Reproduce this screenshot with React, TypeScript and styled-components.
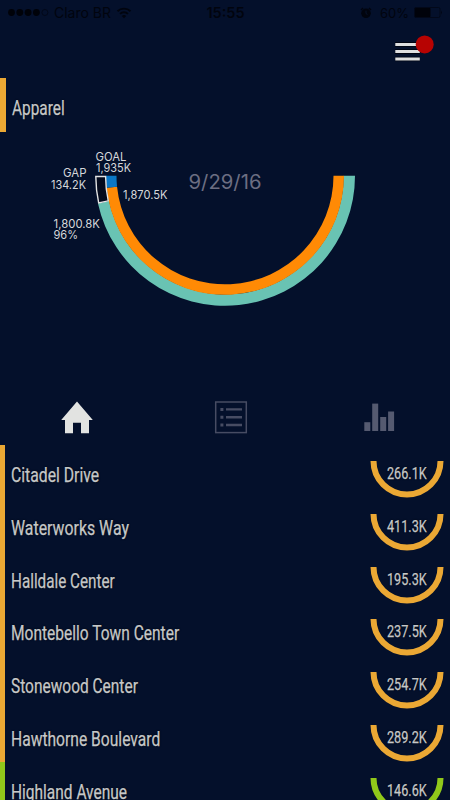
import React, { useLayoutEffect, useRef, useState } from 'react';
import styled, { createGlobalStyle } from 'styled-components';

const GlobalStyle = createGlobalStyle`
  * {
    box-sizing: border-box;
  }

  body {
    margin: 0;
    background: #04102b;
    font-family: Roboto, 'Liberation Sans', sans-serif;
    overflow: hidden;
  }

  svg {
    display: block;
  }
`;

const Screen = styled.div`
  display: flex;
  flex-direction: column;
  height: 800px;
  overflow: hidden;
  background: #04102b;

  > * {
    flex: none;
  }
`;

const StatusBar = styled.div`
  display: grid;
  grid-template-columns: 1fr auto 1fr;
  align-items: center;
  height: 25px;
  padding: 0 7px 0 8px;
  color: #01040e;
  font-family: Inter, 'Liberation Sans', sans-serif;
  font-size: 14px;
`;

const Clock = styled.span`
  font-size: 14.5px;
  font-weight: 600;
`;

const Battery = styled.span`
  padding-left: 3px;
  font-size: 13px;
`;

const StatusGroup = styled.div<{ $end?: boolean }>`
  display: flex;
  align-items: center;
  justify-content: ${({ $end }) => ($end ? 'flex-end' : 'flex-start')};
  gap: 5px;
`;

const Header = styled.header`
  display: flex;
  justify-content: flex-end;
  height: 53px;
  padding: 10px 16px 0 0;
`;

const MenuButton = styled.button`
  width: 40px;
  height: 30px;
  padding: 0;
  border: 0;
  background: none;
`;

const Category = styled.div`
  display: flex;
  align-items: center;
  height: 54px;
  padding: 6px 0 0 6px;
  border-left: 6px solid #eca934;
`;

const GaugeArea = styled.section`
  height: 258px;
`;

const ChartText = styled.text`
  fill: #d6d7da;
  font-family: Inter, 'Liberation Sans', sans-serif;
  font-size: 12px;
`;

const DateText = styled(ChartText)`
  fill: #6c6e82;
  font-size: 19.5px;
`;

const Tabs = styled.nav`
  display: grid;
  grid-template-columns: 154px 154px 142px;
  justify-items: center;
  align-items: center;
  height: 55px;
  padding-bottom: 1px;
`;

const List = styled.div`
  display: flex;
  flex-direction: column;
`;

const Row = styled.div<{ $color: string }>`
  display: flex;
  flex: none;
  justify-content: space-between;
  height: 52.75px;
  padding: 16px 6px 0 6px;
  border-left: 5px solid ${({ $color }) => $color};
`;

const RowName = styled.div`
  padding-top: 3px;
`;

const MiniGauge = styled.div`
  display: grid;
  width: 74px;
  height: 37px;

  > * {
    grid-area: 1 / 1;
  }
`;

const MiniValue = styled.div`
  display: flex;
  justify-content: center;
  padding-top: 1px;
`;

const FitBox = styled.div`
  height: 24px;
  color: #c6c8c9;
  text-shadow: 0 0 2px #000;
`;

const FitLabel = styled.span<{ $size: number }>`
  display: inline-block;
  transform-origin: 0 50%;
  white-space: nowrap;
  font-size: ${({ $size }) => $size}px;
  line-height: 24px;
  -webkit-text-stroke: 0.25px #c6c8c9;
`;

interface ICondensedProps {
  text: string;
  /* The final width of the label in pixels */
  width: number;
  size?: number;
}

// Squeezes a regular face into a condensed one
const Condensed: React.FunctionComponent<ICondensedProps> = ({
  text,
  width,
  size = 19.5,
}) => {
  const ref = useRef<HTMLSpanElement>(null);
  const [scale, setScale] = useState(0.8);

  useLayoutEffect(() => {
    if (ref.current) {
      setScale(width / ref.current.offsetWidth);
    }
  }, [text, width, size]);

  return (
    <FitBox style={{ width }}>
      <FitLabel ref={ref} $size={size} style={{ transform: `scaleX(${scale})` }}>
        {text}
      </FitLabel>
    </FitBox>
  );
};

const YELLOW = '#eba834';
const GREEN = '#91c81a';

const stores = [
  { name: 'Citadel Drive', width: 88, value: '266.1K', color: YELLOW },
  { name: 'Waterworks Way', width: 118, value: '411.3K', color: YELLOW },
  { name: 'Halldale Center', width: 104, value: '195.3K', color: YELLOW },
  { name: 'Montebello Town Center', width: 168, value: '237.5K', color: YELLOW },
  { name: 'Stonewood Center', width: 127, value: '254.7K', color: YELLOW },
  { name: 'Hawthorne Boulevard', width: 149, value: '289.2K', color: YELLOW },
  { name: 'Highland Avenue', width: 116, value: '146.6K', color: GREEN },
];

const labels = [
  { text: 'GOAL', x: 95.5, y: 161, width: 31 },
  { text: '1,935K', x: 96, y: 172, width: 35 },
  { text: 'GAP', x: 63, y: 177, width: 23.5 },
  { text: '134.2K', x: 51, y: 188.5, width: 35 },
  { text: '1,870.5K', x: 123, y: 199, width: 44.5 },
  { text: '1,800.8K', x: 53.5, y: 227.5, width: 46.5 },
  { text: '96%', x: 53.5, y: 239, width: 24.5 },
];

// Angles are in degrees, counted from the left end of the half circle
const point = (radius: number, angle: number) => {
  const rad = (angle * Math.PI) / 180;
  return `${225 - radius * Math.cos(rad)} ${175.8 + radius * Math.sin(rad)}`;
};

const ring = (outer: number, inner: number, from: number, to: number) =>
  `M${point(outer, from)} A${outer} ${outer} 0 0 0 ${point(outer, to)}` +
  ` L${point(inner, to)} A${inner} ${inner} 0 0 1 ${point(inner, from)} Z`;

const Gauge = () => (
  <svg width="450" height="258" viewBox="0 132 450 258">
    <path d={ring(130, 118.7, 12.3, 180)} fill="#69c3b3" />
    <path d={ring(119, 108.5, 5.8, 180)} fill="#ff8a05" />
    <path d={ring(119, 108.5, 0, 5.8)} fill="#0a77c6" />
    <path
      d={ring(129.2, 119.4, 0.3, 12.1)}
      fill="#040a1c"
      stroke="#e4e4e4"
      strokeWidth="1.4"
    />
    {labels.map(({ text, x, y, width }) => (
      <ChartText
        key={text}
        x={x}
        y={y}
        textLength={width}
        lengthAdjust="spacingAndGlyphs"
      >
        {text}
      </ChartText>
    ))}
    <DateText x="188.5" y="188.7" textLength="73" lengthAdjust="spacingAndGlyphs">
      9/29/16
    </DateText>
  </svg>
);

const SignalIcon = () => (
  <svg width="41" height="9" viewBox="0 0 41 9" fill="#000209">
    {[3.5, 11.8, 20.1, 28.4].map((cx) => (
      <circle key={cx} cx={cx} cy="4.5" r="3.4" />
    ))}
    <circle cx="36.9" cy="4.5" r="3" fill="none" stroke="#020819" />
  </svg>
);

const WifiIcon = () => (
  <svg width="16" height="12" viewBox="0 0 16 12" fill="none" stroke="#01040e">
    <path d="M1.5 4.3a9.3 9.3 0 0 1 13 0M4 6.9a5.8 5.8 0 0 1 8 0" strokeWidth="1.9" />
    <path d="M5.8 9a3.2 3.2 0 0 1 4.4 0L8 11.2z" fill="#01040e" stroke="none" />
  </svg>
);

const AlarmIcon = () => (
  <svg width="12" height="12" viewBox="0 0 12 12">
    <circle cx="6" cy="6.3" r="4.8" fill="#01040e" />
    <path d="M1 3l2-2M11 3L9 1" stroke="#01040e" strokeWidth="1.3" />
    <path d="M6 3.6v3l1.5.8" fill="none" stroke="#07122b" />
  </svg>
);

const BatteryIcon = () => (
  <svg width="29" height="11" viewBox="0 0 29 11">
    <rect x=".5" y=".5" width="25.5" height="10" rx="1.5" fill="none" stroke="#020819" />
    <rect x="1" y="1" width="15.5" height="9" rx=".8" fill="#00020a" />
    <path d="M27 3.6q1.6 1.9 0 3.8z" fill="#01040e" />
  </svg>
);

const MenuIcon = () => (
  <svg width="40" height="30" viewBox="394 35 40 30">
    <path
      d="M395 44.4h25M395 51.6h25M395 59h25"
      stroke="#000411"
      strokeWidth="4.6"
    />
    <path d="M395.3 44.4h24.5M395.3 51.6h24.5M395.3 59h24.5" stroke="#dedfe0" strokeWidth="3" />
    <circle cx="424.7" cy="44.4" r="9" fill="#b70302" />
  </svg>
);

const HomeIcon = () => (
  <svg width="34" height="34" viewBox="60 400 34 34">
    <path
      d="M77 401.4L92.8 420H89v13.3h-8v-10.6h-8v10.6h-8V420h-3.8z"
      fill="#e2e3e1"
    />
  </svg>
);

const ListIcon = () => (
  <svg width="34" height="34" viewBox="214 400 34 34" stroke="#474c63">
    <rect x="215.7" y="402" width="30.6" height="30.6" fill="none" strokeWidth="1.5" />
    <path d="M220.4 409.4h3M220.4 417.2h3M220.4 425h3" strokeWidth="3" />
    <path d="M226 409.4h16M226 417.2h16M226 425h16" strokeWidth="2.4" />
  </svg>
);

const BarsIcon = () => (
  <svg width="34" height="34" viewBox="362 400 34 34" fill="#555a70">
    <rect x="364.3" y="422.2" width="6" height="8.8" />
    <rect x="372.2" y="403.6" width="6" height="27.4" />
    <rect x="380.2" y="417" width="6" height="14" />
    <rect x="388.1" y="411.5" width="6" height="19.5" />
  </svg>
);

const App = () => (
  <>
    <GlobalStyle />
    <Screen>
      <StatusBar>
        <StatusGroup>
          <SignalIcon />
          <span>Claro BR</span>
          <WifiIcon />
        </StatusGroup>
        <Clock>15:55</Clock>
        <StatusGroup $end>
          <AlarmIcon />
          <Battery>60%</Battery>
          <BatteryIcon />
        </StatusGroup>
      </StatusBar>
      <Header>
        <MenuButton aria-label="Menu">
          <MenuIcon />
        </MenuButton>
      </Header>
      <Category>
        <Condensed text="Apparel" width={52.5} size={20.5} />
      </Category>
      <GaugeArea>
        <Gauge />
      </GaugeArea>
      <Tabs>
        <HomeIcon />
        <ListIcon />
        <BarsIcon />
      </Tabs>
      <List>
        {stores.map(({ name, width, value, color }) => (
          <Row key={name} $color={color}>
            <RowName>
              <Condensed text={name} width={width} />
            </RowName>
            <MiniGauge>
              <svg width="74" height="37" viewBox="0 0 74 37">
                <path
                  d="M3.5 0a33.5 33.5 0 0 0 67 0"
                  fill="none"
                  stroke={color}
                  strokeWidth="6"
                />
              </svg>
              <MiniValue>
                <Condensed text={value} width={39.5} size={16} />
              </MiniValue>
            </MiniGauge>
          </Row>
        ))}
      </List>
    </Screen>
  </>
);

export default App;
